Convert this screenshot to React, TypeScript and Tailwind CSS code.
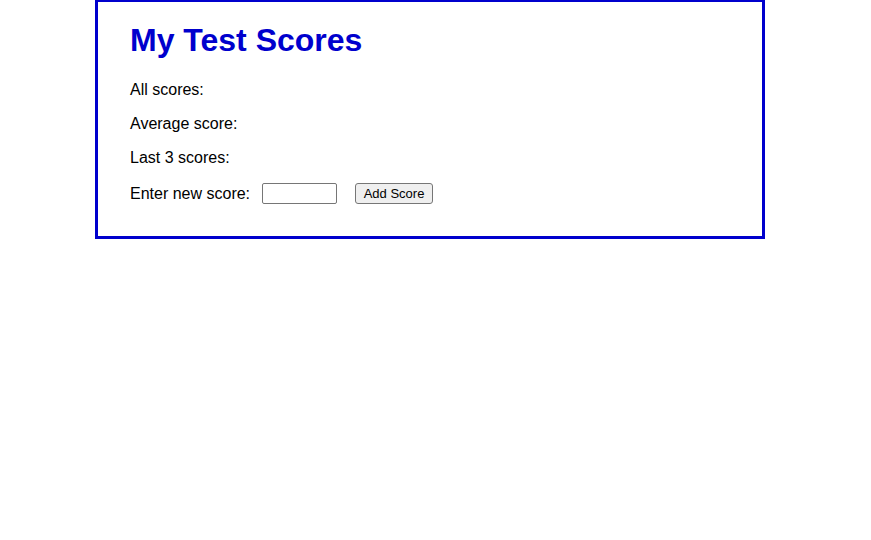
export default function App() {
  return (
    <div className="bg-white min-h-[540px] font-['Liberation_Sans',Arial,sans-serif] text-black leading-[normal]">
      <div className="ml-[95px] mt-[-1px] w-[670px] border-[3px] border-[#0000cd] px-[32px] pb-[16px]">
        <h1 className="text-[32px] font-bold text-[#0000cd] mt-[20px] mb-[22px]">My Test Scores</h1>
        <p className="text-[16px] my-[16px]">All scores:</p>
        <p className="text-[16px] my-[16px]">Average score:</p>
        <p className="text-[16px] my-[16px]">Last 3 scores:</p>
        <div className="flex items-center text-[16px] my-[16px]">
          <label>Enter new score:</label>
          <input
            type="text"
            className="ml-[12px] w-[75px] h-[21px] border border-[#767676] rounded-[2px] px-[2px] text-[13px] bg-white"
          />
          <button className="ml-[18px] h-[21px] w-[78px] text-[13px] bg-[#efefef] border border-[#767676] rounded-[3px] text-black">
            Add Score
          </button>
        </div>
      </div>
    </div>
  );
}
